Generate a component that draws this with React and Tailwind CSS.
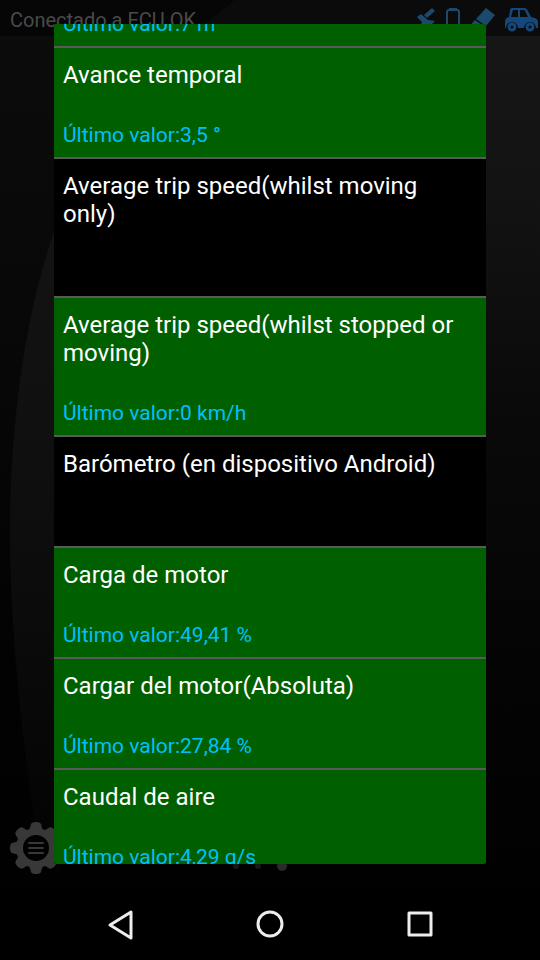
import React from 'react';

const sensors = [
  { name: 'Altitud', value: '7 m', active: true },
  { name: 'Avance temporal', value: '3,5 °', active: true },
  { name: 'Average trip speed(whilst moving only)', active: false },
  { name: 'Average trip speed(whilst stopped or moving)', value: '0 km/h', active: true },
  { name: 'Barómetro (en dispositivo Android)', active: false },
  { name: 'Carga de motor', value: '49,41 %', active: true },
  { name: 'Cargar del motor(Absoluta)', value: '27,84 %', active: true },
  { name: 'Caudal de aire', value: '4,29 g/s', active: true },
];

const Backdrop = () => (
  <svg
    className="absolute inset-0 h-full w-full"
    viewBox="0 0 540 960"
    preserveAspectRatio="none"
    aria-hidden="true"
  >
    <defs>
      <linearGradient id="base" x1="0" y1="0" x2="0" y2="960" gradientUnits="userSpaceOnUse">
        <stop offset="0" stopColor="#0c0c0c" />
        <stop offset="0.4" stopColor="#070707" />
        <stop offset="0.7" stopColor="#020202" />
        <stop offset="0.92" stopColor="#010101" />
      </linearGradient>
      <linearGradient id="sheen" x1="0" y1="0" x2="0" y2="960" gradientUnits="userSpaceOnUse">
        <stop offset="0" stopColor="#171717" />
        <stop offset="0.2" stopColor="#131313" />
        <stop offset="0.45" stopColor="#090909" />
        <stop offset="0.7" stopColor="#040404" />
        <stop offset="0.92" stopColor="#010101" />
      </linearGradient>
      <linearGradient id="edge" x1="0" y1="220" x2="0" y2="880" gradientUnits="userSpaceOnUse">
        <stop offset="0" stopColor="#131313" />
        <stop offset="0.3" stopColor="#101010" />
        <stop offset="0.6" stopColor="#0b0b0b" />
        <stop offset="1" stopColor="#020202" />
      </linearGradient>
    </defs>
    <rect width="540" height="960" fill="url(#base)" />
    <path d="M235 0H540V890H300L190 36Z" fill="url(#sheen)" />
    <path d="M54 232C24 318 10 430 10 530C10 630 22 740 36 830L60 880V220Z" fill="url(#edge)" />
  </svg>
);

const StatusIcons = () => (
  <svg className="h-9 w-[124px] shrink-0" viewBox="0 0 124 36" aria-hidden="true">
    <g fill="#1c496c">
      <path d="M16 8L19 11L11 18L8 15Z" />
      <path d="M1 17L5 14L12 20L19 21L13 27H4L6 22Z" />
      <path d="M70 8L79 15L70 26L60 19Z" />
      <path d="M59 20L69 27L57 28L56 23Z" />
    </g>
    <rect x="31" y="10" width="12" height="20" rx="2" fill="none" stroke="#1c496c" strokeWidth="2" />
    <path d="M33 9H41" stroke="#1c496c" strokeWidth="2" />
    <path
      fill="#15477a"
      fillRule="evenodd"
      d="M96 8H108C110 8 111 9 112 11L115 17L119 18C121 19 122 20 122 22V28H120A6 6 0 0 0 108 28H102A6 6 0 0 0 90 28H89V22C89 19 90 18 93 17L94 10C94 9 95 8 96 8ZM97 10L95 17H102V10ZM104 10V17H112L109 11C109 10 108 10 107 10Z"
    />
    <g fill="none" stroke="#15477a" strokeWidth="3">
      <circle cx="96" cy="27" r="3" />
      <circle cx="114" cy="27" r="3" />
    </g>
  </svg>
);

const GearIcon = () => (
  <svg className="h-13 w-13" viewBox="-26 -26 52 52" aria-hidden="true">
    <g fill="#383838">
      <circle r="20" />
      {[0, 45, 90, 135, 180, 225, 270, 315].map((angle) => (
        <path
          key={angle}
          transform={`rotate(${angle})`}
          d="M-9 -17C-5 -19 -6 -22 -5 -24Q-4 -26 0 -26Q4 -26 5 -24C6 -22 5 -19 9 -17Z"
        />
      ))}
    </g>
    <circle r="13" fill="#020202" />
    <path d="M-7 -5H7M-7 0H7M-7 5H7" stroke="#383838" strokeWidth="2" strokeLinecap="round" />
  </svg>
);

const SensorRow = ({ sensor }) => (
  <li className="shrink-0 border-b-2 border-[#5a5a5a]">
    <button
      type="button"
      className={`flex w-full flex-col pt-[13px] pr-5 pb-[9px] pl-[9px] text-left ${
        sensor.active ? 'bg-[#006000]' : 'bg-black'
      }`}
    >
      <span className="text-[24px] leading-7 text-white">{sensor.name}</span>
      <span className="mt-[34px] h-[25px] text-[21px] leading-[25px] text-[#00bfff]">
        {sensor.value && `Último valor:${sensor.value}`}
      </span>
    </button>
  </li>
);

const NavButton = ({ label, children }) => (
  <button type="button" aria-label={label} className="flex flex-1 items-center justify-center">
    <svg
      className="h-8 w-8"
      viewBox="0 0 32 32"
      fill="none"
      stroke="#ededed"
      strokeWidth="3"
      strokeLinejoin="round"
    >
      {children}
    </svg>
  </button>
);

export default function App() {
  return (
    <div className="relative flex min-h-screen flex-col overflow-hidden bg-black font-['Roboto',sans-serif]">
      <Backdrop />

      <header className="relative flex h-9 items-center justify-between bg-black/50 pl-[10px]">
        <span className="pt-1 text-[20px] leading-6 text-[#4a4a4a]">Conectado a ECU OK</span>
        <StatusIcons />
      </header>

      <main className="relative flex flex-1 items-end px-[10px] pb-[14px]">
        <button type="button" aria-label="Menú">
          <GearIcon />
        </button>
        <div className="absolute inset-x-0 bottom-4 flex h-3 items-center justify-center gap-4 pr-5">
          <span className="h-1.5 w-1.5 rounded-full bg-[#181818]" />
          <span className="h-1.5 w-1.5 rounded-full bg-[#181818]" />
          <span className="h-2.5 w-2.5 rounded-full bg-[#2a2a2a]" />
        </div>
      </main>

      <nav className="relative flex h-[72px] bg-black px-[45px]">
        <NavButton label="Atrás">
          <path d="M6 17L27 4V30Z" />
        </NavButton>
        <NavButton label="Inicio">
          <circle cx="16" cy="16" r="12" />
        </NavButton>
        <NavButton label="Recientes">
          <rect x="5" y="5" width="22" height="22" />
        </NavButton>
      </nav>

      {/* Sensor picker, scrolled a little way down */}
      <div
        role="dialog"
        aria-label="Sensores"
        className="absolute inset-x-[10%] top-6 bottom-24 overflow-hidden rounded-xs bg-black"
      >
        <ul className="-mt-[87px] flex flex-col">
          {sensors.map((sensor) => (
            <SensorRow key={sensor.name} sensor={sensor} />
          ))}
        </ul>
      </div>
    </div>
  );
}
